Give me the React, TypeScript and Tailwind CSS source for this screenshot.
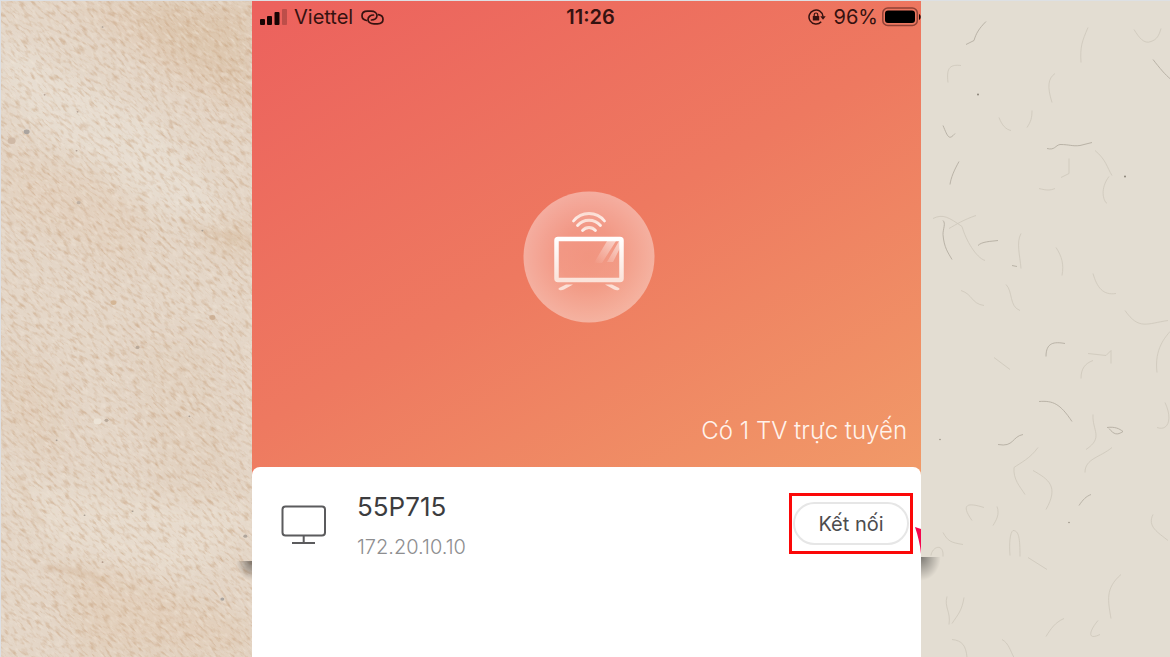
const specks = [
  { x: 26, y: 131, r: 3, fill: "#aaa49f" },
  { x: 11, y: 140, r: 4, fill: "#cfb9a6" },
  { x: 102, y: 26, r: 1, fill: "#a79c92" },
  { x: 77, y: 111, r: 1, fill: "#b5a396" },
  { x: 76, y: 150, r: 1, fill: "#b09d90" },
  { x: 78, y: 202, r: 2, fill: "#c0b1a4" },
  { x: 44, y: 94, r: 1, fill: "#b5a396" },
  { x: 202, y: 230, r: 1, fill: "#a79c92" },
  { x: 113, y: 302, r: 3, fill: "#d4b696" },
  { x: 212, y: 317, r: 3, fill: "#cdb196" },
  { x: 137, y: 347, r: 2, fill: "#b9a999" },
  { x: 106, y: 420, r: 2, fill: "#b9a999" },
  { x: 56, y: 440, r: 1, fill: "#a79c92" },
  { x: 189, y: 416, r: 1, fill: "#a79c92" },
  { x: 84, y: 515, r: 1, fill: "#a79c92" },
  { x: 132, y: 511, r: 1, fill: "#a79c92" },
  { x: 102, y: 562, r: 1, fill: "#b29a8a" },
  { x: 222, y: 599, r: 2, fill: "#aaa49f" },
  { x: 245, y: 536, r: 2, fill: "#b0a69c" },
  { x: 97, y: 421, r: 4, fill: "#ece3d6" },
];

// Fibres in the paper on the right, darkest first.
const darkFibres = [
  "M126 148c8 2 8-3 13-4c10 0 12 2 20 1l12-3",
  "M91 265l5 1",
  "M65 21c-7 7-10 12-12 19l-8 4",
  "M38 161c-5 9-8 16-9 23",
  "M125 356c0-14 8-15 19-13",
  "M118 401c14-1 21 2 33 20",
  "M186 427c8-1 12 1 16 4c-6 4-9 3-14-3",
  "M77 444c16 3 14-8 25-10",
  "M158 505c4-6 7-9 12-11",
  "M22 220c3 3 0 8 0 14c1 13 5 18 9 25",
  "M57 245c4-4 12-4 20-5",
  "M22 125c5 12 6 15 12 8",
  "M232 59c7 9 12 15 18 20",
];

const lightFibres = [
  "M27 82c-2-16 3-18 13-17",
  "M131 102c-5-16-4-24 3-29",
  "M78 117c3 8 7 12 12 13",
  "M111 110c0 7-1 11-5 17",
  "M167 27c-6 14-8 19-7 35",
  "M213 29c5 8 10 15 17 12c6-2 8-6 10-13",
  "M188 176c-9 12-6 24-2 27",
  "M174 150c11 9 12 17 17 25",
  "M148 158v15l-8 4",
  "M118 188c8 2 11 2 16 0",
  "M12 218c10-5 16-1 29 8c4 14 14 31 23 34",
  "M55 215c-12 4-20 9-27 13",
  "M100 233c-5 9-1 22 0 35",
  "M135 247c6 9 8 17 6 28",
  "M40 290c12 4 10 13 23 15",
  "M85 284c7 7 3 22 14 26",
  "M172 273c4 14 10 22 23 20",
  "M204 310c14 20 22 13 43 10",
  "M167 353l18 2l5-5v13",
  "M160 378c0-10 4-15 12-18",
  "M73 357l16 12",
  "M172 414c-1 16 11 23-7 35",
  "M191 447c-12 10-27 11-27 25",
  "M117 447c-8 11-17 15-24 20c-1 12 6 19 11 27",
  "M112 470c16 9 26 16 13 39",
  "M51 520c-12-17-4-18 12-13",
  "M76 506c3 8-1 14-4 19",
  "M89 555c-1-12 0-23 3-25c6 0 7 8 7 26",
  "M22 532c5 9 8 10 20 12",
  "M107 557l19 12",
  "M232 514c-6 12 5 18 15 26",
  "M10 555c1-9 13-13 12 1",
  "M26 596c-3 11 4 15 2 28",
  "M43 597c-2 13-6 17-12 26",
  "M31 639c10 1 14 6 15 18",
  "M177 620c-10 12-10 20 2 14",
  "M143 618c-9 4-13 10-18 18",
  "M190 618c-3-18-6-30 10-44",
  "M81 639c7 4 8 11 12 18",
  "M236 372c-3-24 9-36 13-41",
  "M244 402c8 17 3 29-8 25",
];

function SandPaper() {
  return (
    <svg aria-hidden className="absolute inset-0 h-full w-full" viewBox="0 0 252 657" preserveAspectRatio="xMidYMid slice">
      <defs>
        <filter id="grain" x="0" y="0" width="100%" height="100%" colorInterpolationFilters="sRGB">
          <feTurbulence type="fractalNoise" baseFrequency="0.11 0.34" numOctaves="4" seed="7" />
          <feColorMatrix values="0 0 0 0 0.76  0 0 0 0 0.6  0 0 0 0 0.45  2.4 0 0 0 -1.15" />
        </filter>
        <filter id="light" x="0" y="0" width="100%" height="100%" colorInterpolationFilters="sRGB">
          <feTurbulence type="fractalNoise" baseFrequency="0.12 0.38" numOctaves="3" seed="22" />
          <feColorMatrix values="0 0 0 0 0.94  0 0 0 0 0.9  0 0 0 0 0.85  2.4 0 0 0 -1.15" />
        </filter>
        <filter id="soft" x="-50%" y="-50%" width="200%" height="200%">
          <feGaussianBlur stdDeviation="11" />
        </filter>
        <filter id="crease" x="-50%" y="-50%" width="200%" height="200%">
          <feGaussianBlur stdDeviation="2" />
        </filter>
      </defs>
      <rect width="252" height="657" fill="#e4d6c7" />
      <g filter="url(#soft)">
        <path d="M0 0h60l60 40l50 40l82 40V0z" fill="#dfc8af" opacity="0.5" />
        <path d="M120 0l50 55l82 45V0z" fill="#d8bc9f" opacity="0.4" />
        <path d="M0 30l80 50l70 35l60 70l10 40l-60-15l-70-50l-60-35L0 80z" fill="#e7ddd0" />
        <path d="M0 150l90 20l60 45l-20 60l-130-60z" fill="#e0cab5" opacity="0.4" />
        <path d="M195 228l57 0v28l-28-8z" fill="#d9bd9f" opacity="0.7" />
        <path d="M0 340l60 40v90L0 430z" fill="#dfc9b2" opacity="0.4" />
        <path d="M130 340h80l30 160l-80 20z" fill="#dfc9b2" opacity="0.3" />
        <path d="M0 480l60 70l120 30l70-50v-30l-110 0z" fill="#e7dbcd" />
        <path d="M60 565l80 10l112 50v32H80z" fill="#dec5ab" opacity="0.4" />
      </g>
      <g transform="rotate(42 126 328)">
        <rect x="-300" y="-120" width="860" height="900" filter="url(#grain)" opacity="0.6" />
        <rect x="-300" y="-120" width="860" height="900" filter="url(#light)" opacity="0.6" />
      </g>
      <g filter="url(#crease)" fill="none" stroke="#c9a27d" opacity="0.3">
        <path d="M15 476c10 12 15 37 28 49" strokeWidth="3" />
        <path d="M43 567c25 1 43 6 63 13" strokeWidth="4" />
        <path d="M180 218l22 12l50 10" strokeWidth="3" />
      </g>
      {specks.map((s, i) => (
        <ellipse key={i} cx={s.x} cy={s.y} rx={s.r} ry={s.r * 0.8} fill={s.fill} />
      ))}
    </svg>
  );
}

function FibrePaper() {
  return (
    <svg aria-hidden className="absolute inset-0 h-full w-full" viewBox="0 0 249 657" preserveAspectRatio="xMidYMid slice" fill="none">
      <g stroke="#a8a091" strokeWidth="0.7" opacity="0.4">
        {lightFibres.map((d) => (
          <path key={d} d={d} />
        ))}
      </g>
      <g stroke="#8d8578" strokeWidth="0.8" opacity="0.6">
        {darkFibres.map((d) => (
          <path key={d} d={d} />
        ))}
      </g>
      <g fill="#8a8378">
        <circle cx="57" cy="94" r="1" />
        <circle cx="204" cy="176" r="1" />
        <circle cx="148" cy="522" r="0.7" />
        <circle cx="19" cy="439" r="0.7" />
      </g>
    </svg>
  );
}

function StatusBar() {
  return (
    <div className="grid grid-cols-[1fr_auto_1fr] items-center pl-2 font-['Inter',sans-serif] text-xl leading-8 text-[#351210]">
      <div className="flex items-center">
        <svg aria-hidden width="28" height="16" viewBox="0 0 28 16" fill="#170403">
          <rect x="0" y="10" width="5" height="6" rx="1" />
          <rect x="7" y="7" width="5" height="9" rx="1" />
          <rect x="14.5" y="3" width="5" height="13" rx="1" />
          <rect x="22" y="0" width="5" height="16" rx="1" opacity="0.22" />
        </svg>
        <span className="ml-1.5">Viettel</span>
        <svg aria-hidden className="ml-2" width="23" height="15" viewBox="0 0 23 15" fill="none" stroke="currentColor" strokeWidth="1.7" strokeLinecap="round">
          <path d="M5.500 10.500C3 10 1 8.300 1 5.800C1 3 3.200 1.200 6.500 1.200h3.500C13.500 1.200 16 3 16 5.600S13.500 10 10.500 10" />
          <path d="M17.500 4.700C20 5.200 22 6.700 22 9.200c0 2.800-2.200 4.600-5.500 4.600H13C9.500 13.800 7 12 7 9.400S9.500 5 12.500 5" />
        </svg>
      </div>
      <span className="font-semibold">11:26</span>
      <div className="flex items-center justify-end">
        <svg aria-hidden width="18" height="16" viewBox="0 0 18 16" fill="none" stroke="currentColor" strokeWidth="1.5">
          <path d="M13.200 12.800A7 7 0 1 1 15 7.500" />
          <path d="M12.300 7.300h5.400L15 10.800z" fill="currentColor" stroke="none" />
          <rect x="4.800" y="7" width="6.400" height="4.600" rx="0.600" fill="currentColor" stroke="none" />
          <path d="M6.200 7.500V5.800a1.800 1.800 0 0 1 3.600 0v1.700" strokeWidth="1.200" />
        </svg>
        <span className="ml-2">96%</span>
        <svg aria-hidden className="ml-1" width="39" height="20" viewBox="0 0 39 20">
          <rect x="0.800" y="1" width="34.500" height="17.500" rx="5" fill="none" stroke="#8f4136" strokeWidth="1.500" />
          <rect x="3" y="3.500" width="30" height="12.500" rx="3" fill="#000" />
          <path d="M37 7v6c2-1 2.500-5 0-6z" fill="#1b0504" />
        </svg>
      </div>
    </div>
  );
}

function TvBadge() {
  return (
    <svg aria-label="TV" role="img" width="132" height="132" viewBox="0 0 132 132" fill="none">
      <defs>
        <radialGradient id="disc">
          <stop offset="0" stopColor="#fff" stopOpacity="0.2" />
          <stop offset="0.45" stopColor="#fff" stopOpacity="0.23" />
          <stop offset="1" stopColor="#fff" stopOpacity="0.4" />
        </radialGradient>
        <linearGradient id="frame" x1="0" y1="0" x2="0" y2="1">
          <stop offset="0" stopColor="#fff" />
          <stop offset="1" stopColor="#fbe3da" />
        </linearGradient>
        <linearGradient id="glare" x1="1" y1="0" x2="0" y2="1">
          <stop offset="0" stopColor="#fff" stopOpacity="0.6" />
          <stop offset="1" stopColor="#fff" stopOpacity="0" />
        </linearGradient>
        <linearGradient id="waves" x1="0" y1="0" x2="0" y2="1">
          <stop offset="0" stopColor="#fbded4" />
          <stop offset="1" stopColor="#fdeee9" />
        </linearGradient>
      </defs>
      <circle cx="66" cy="66" r="65.500" fill="url(#disc)" />
      <g stroke="url(#waves)" strokeWidth="2.800" strokeLinecap="round">
        <path d="M50.500 30c8-10 23-10 31 0" />
        <path d="M54.500 34.500c6-7 17-7 23 0" />
        <path d="M59.500 39.500c3.500-4 9.500-4 13 0" />
      </g>
      <path d="M84 50h9L79 72h-8z M96 50h2v5L90 71h-6z" fill="url(#glare)" />
      <rect x="33.500" y="48" width="65" height="41" rx="1.500" stroke="url(#frame)" strokeWidth="4.500" />
      <g fill="#fcdfd5">
        <path d="M43 93.500h7l-9 5c-3 1.500-7 .5-5-1.500z" />
        <path d="M89 93.500h-7l9 5c3 1.500 7 .5 5-1.500z" />
      </g>
    </svg>
  );
}

function MonitorIcon() {
  return (
    <svg aria-hidden width="46" height="40" viewBox="0 0 46 40" fill="none" stroke="#5b5b5d" strokeWidth="2">
      <rect x="1.500" y="1.500" width="42.500" height="29" rx="3" />
      <path d="M22.700 31v7M11 38h23" />
    </svg>
  );
}

export default function App() {
  return (
    <div className="grid min-h-screen grid-cols-[252fr_669fr_249fr] bg-[#e3ddd2]">
      <aside className="relative overflow-hidden border-t border-l border-[#dde0e4]">
        <SandPaper />
        <div className="absolute top-[560px] right-0 h-5 w-4 bg-radial-[at_100%_0%] from-black/45 to-transparent to-70%" />
      </aside>

      <main className="flex min-w-0 flex-col overflow-hidden border-t border-[#dde0e4] bg-white font-['Inter',sans-serif]">
        <section className="flex flex-col bg-linear-[150deg] from-[#ec615d] via-[#ee7960] to-[#f19a68] pb-2">
          <StatusBar />
          <div className="mt-[158px] flex justify-center pl-1">
            <TvBadge />
          </div>
          <p className="mt-23 mb-5 pr-3.5 text-right text-2xl leading-8 font-light text-[#fff3ec]">
            Có 1 TV trực tuyến
          </p>
        </section>

        <section className="relative -mt-2 flex grow items-start justify-between rounded-t-lg bg-white pt-6 pr-2 pl-7">
          <div className="flex">
            <div className="mt-3.5 pl-px">
              <MonitorIcon />
            </div>
            <div className="ml-7.5">
              <h1 className="text-[26px] leading-8 text-[#3c3c3e]">55P715</h1>
              <p className="mt-2 text-xl leading-8 font-light text-[#8e8e90]">172.20.10.10</p>
            </div>
          </div>
          <div className="mt-0.5 border-3 border-[#fb0808] px-px py-1.5">
            <button type="button" className="block h-[43px] w-[116px] rounded-full border-2 border-[#e6e6e6] bg-white text-xl text-[#4c4c4e]">
              Kết nối
            </button>
          </div>
          <svg aria-hidden className="absolute top-15 right-0" width="6" height="28" viewBox="0 0 6 28">
            <path d="M0 0l6 2v25C5 17 3 9 0 0z" fill="#f5064d" />
          </svg>
        </section>
      </main>

      <aside className="relative overflow-hidden border-t border-[#dde0e4]">
        <FibrePaper />
        <div className="absolute top-[556px] left-0 h-6 w-5 bg-radial-[at_0%_0%] from-black/45 to-transparent to-70%" />
      </aside>
    </div>
  );
}
